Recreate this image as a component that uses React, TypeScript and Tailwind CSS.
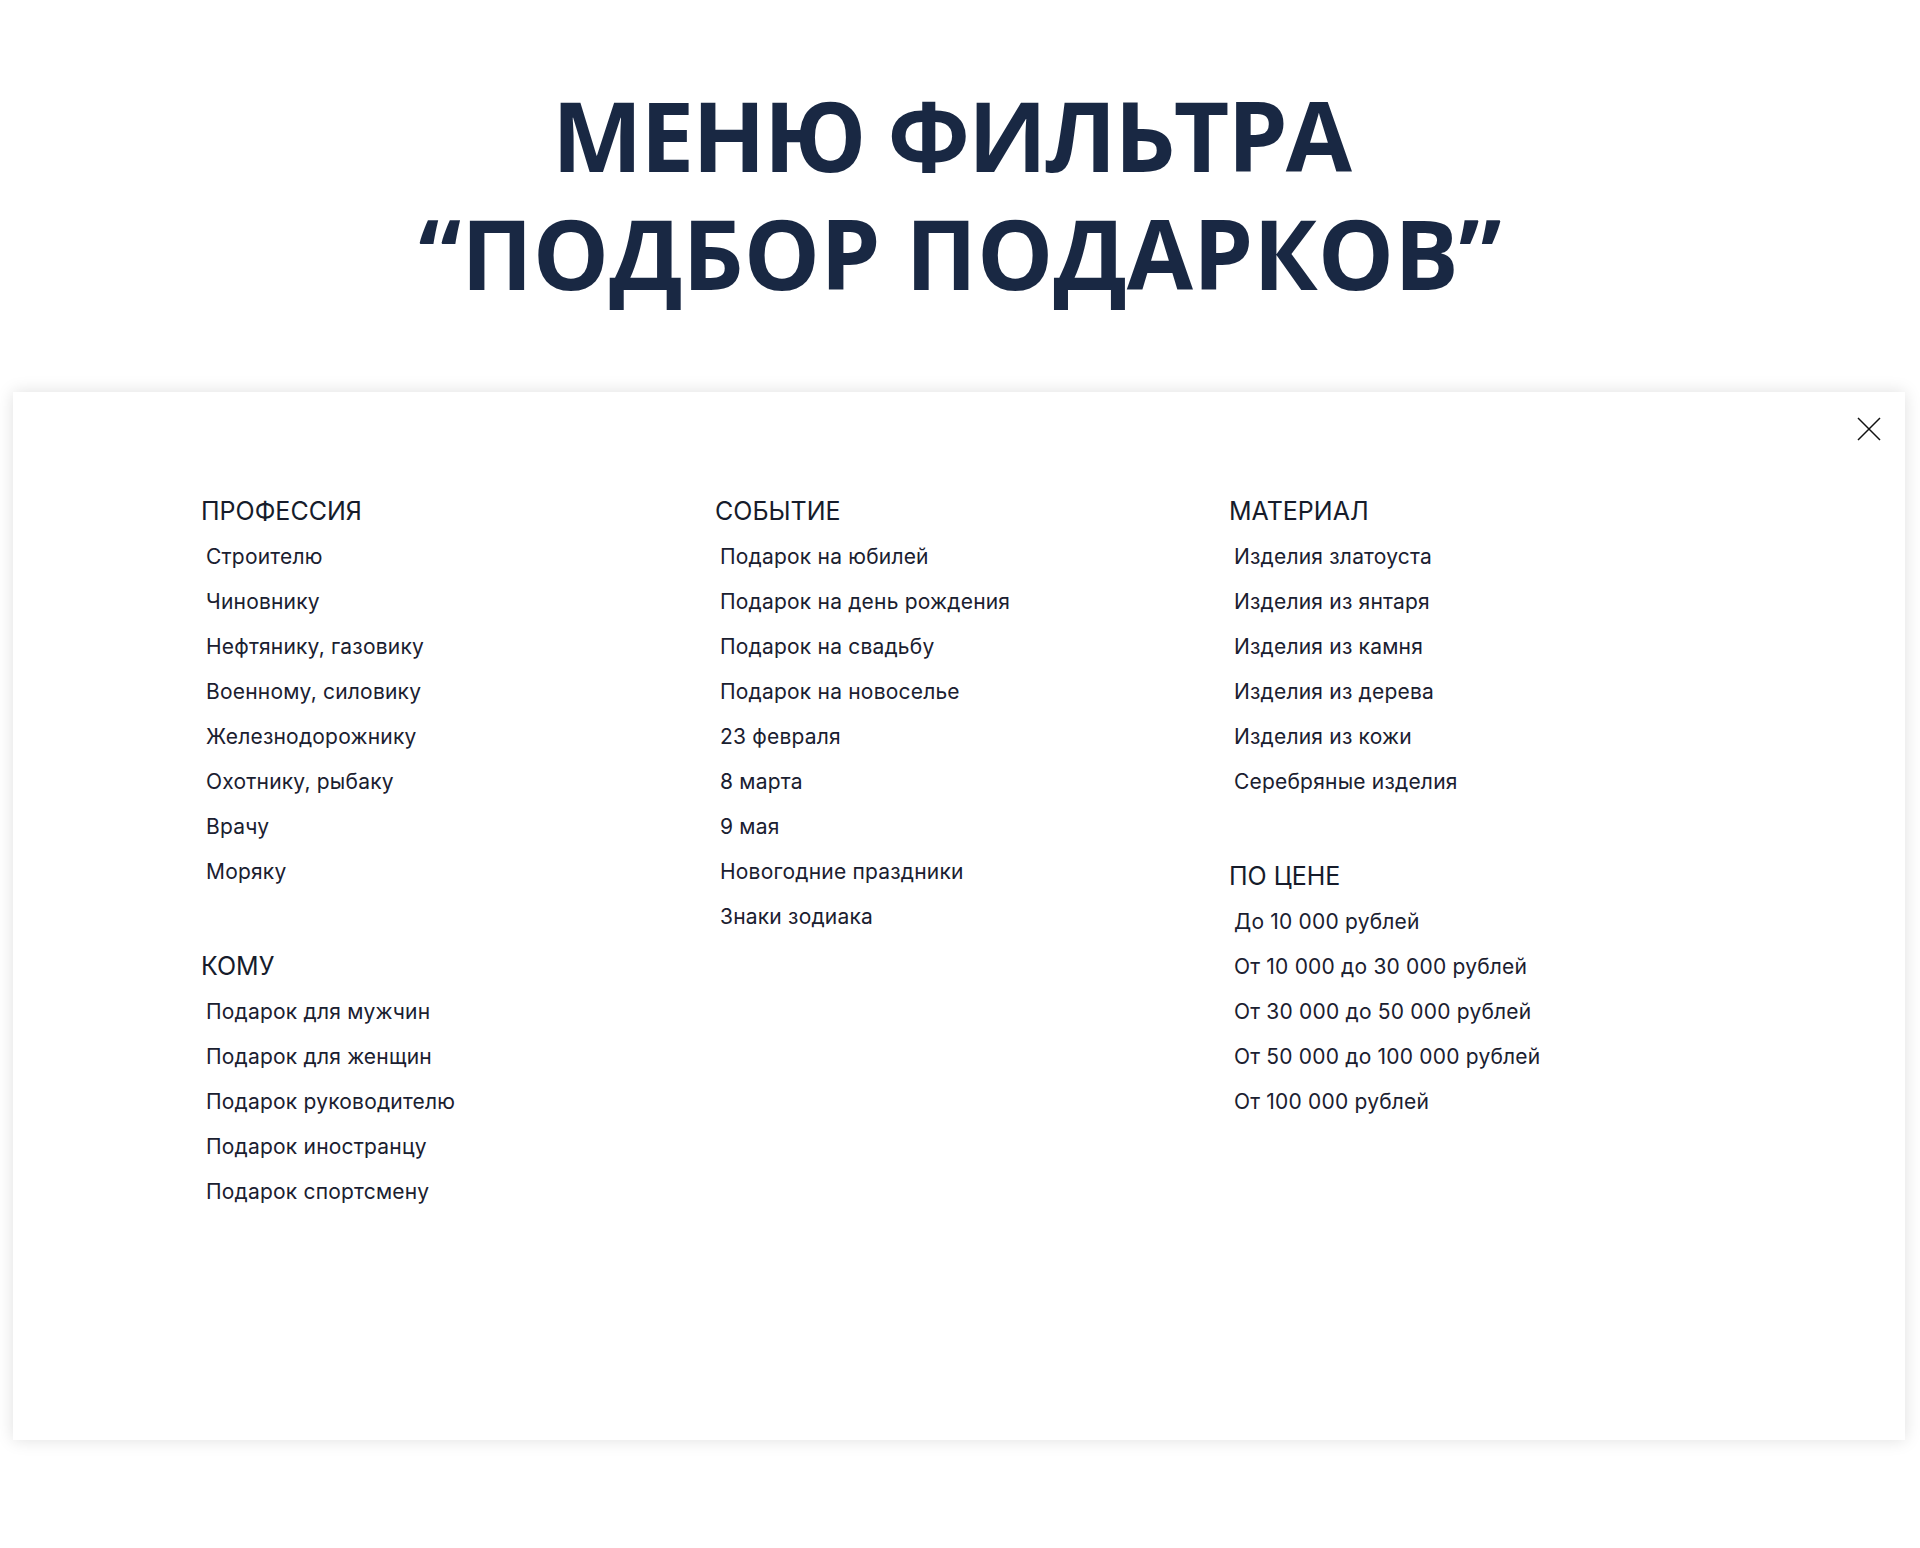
const groups = {
  left: [
    {
      title: "ПРОФЕССИЯ",
      items: [
        "Строителю",
        "Чиновнику",
        "Нефтянику, газовику",
        "Военному, силовику",
        "Железнодорожнику",
        "Охотнику, рыбаку",
        "Врачу",
        "Моряку",
      ],
    },
    {
      title: "КОМУ",
      items: [
        "Подарок для мужчин",
        "Подарок для женщин",
        "Подарок руководителю",
        "Подарок иностранцу",
        "Подарок спортсмену",
      ],
    },
  ],
  middle: [
    {
      title: "СОБЫТИЕ",
      items: [
        "Подарок на юбилей",
        "Подарок на день рождения",
        "Подарок на свадьбу",
        "Подарок на новоселье",
        "23 февраля",
        "8 марта",
        "9 мая",
        "Новогодние праздники",
        "Знаки зодиака",
      ],
    },
  ],
  right: [
    {
      title: "МАТЕРИАЛ",
      items: [
        "Изделия златоуста",
        "Изделия из янтаря",
        "Изделия из камня",
        "Изделия из дерева",
        "Изделия из кожи",
        "Серебряные изделия",
      ],
    },
    {
      title: "ПО ЦЕНЕ",
      items: [
        "До 10 000 рублей",
        "От 10 000 до 30 000 рублей",
        "От 30 000 до 50 000 рублей",
        "От 50 000 до 100 000 рублей",
        "От 100 000 рублей",
      ],
    },
  ],
}

type Group = { title: string; items: string[] }

function FilterColumn({ list }: { list: Group[] }) {
  return (
    <div className="flex flex-col gap-[50px]">
      {list.map((g) => (
        <div key={g.title}>
          <h3 className="text-[25px] leading-[45px] text-[#161c2b]">{g.title}</h3>
          <ul>
            {g.items.map((item) => (
              <li key={item}>
                <a href="#" className="block pl-[5px] text-[21px] leading-[45px] tracking-[0.2px] text-[#1a2030]">
                  {item}
                </a>
              </li>
            ))}
          </ul>
        </div>
      ))}
    </div>
  )
}

export default function App() {
  return (
    <main className="min-h-[1548px] bg-white">
      <h1 className="pt-[76px] text-center text-[96px] leading-[118px] font-bold text-[#192843] font-['Open_Sans',sans-serif]">
        <span className="tracking-[-2px] pr-[18px]">МЕНЮ ФИЛЬТРА</span>
        <br />
        “ПОДБОР ПОДАРКОВ”
      </h1>

      <section className="relative mt-[80px] ml-[13px] w-[1892px] h-[1048px] bg-white shadow-[0_0_16px_rgba(0,0,0,0.13)] font-['Inter',sans-serif]">
        <button className="absolute top-[25px] right-[24px]">
          <svg width="24" height="24" viewBox="0 0 24 24" fill="none" stroke="#111" strokeWidth="1.5">
            <path d="M1 1 L23 23 M23 1 L1 23" />
          </svg>
        </button>

        <div className="grid grid-cols-[514px_514px_514px] pl-[188px] pt-[97px]">
          <FilterColumn list={groups.left} />
          <FilterColumn list={groups.middle} />
          <FilterColumn list={groups.right} />
        </div>
      </section>
    </main>
  )
}
